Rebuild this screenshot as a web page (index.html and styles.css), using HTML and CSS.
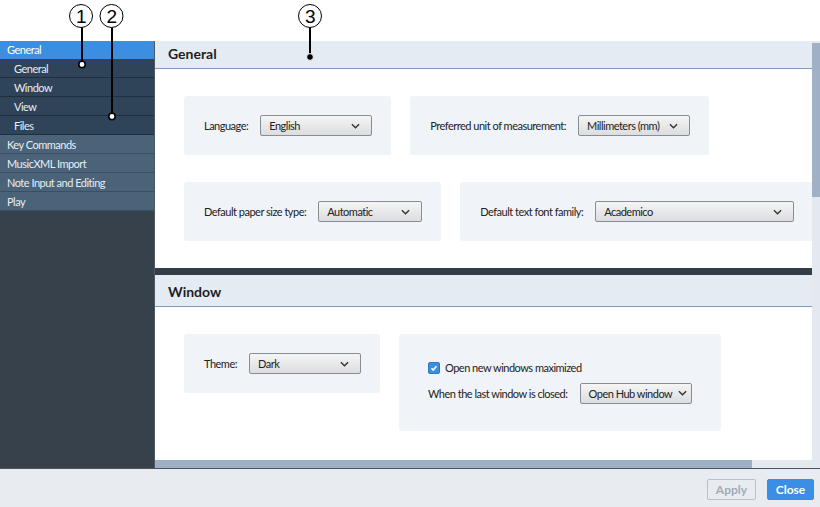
FILE: index.html
```html
<!DOCTYPE html>
<html lang="en">
<head>
    <meta charset="UTF-8">
    <title>Preferences</title>
    <link rel="stylesheet" href="styles.css">
</head>
<body>
    <div class="top-gap"></div>

    <div class="dialog">
        <nav class="sidebar">
            <div class="nav-item cur">General</div>
            <div class="nav-item sub">General</div>
            <div class="nav-item sub">Window</div>
            <div class="nav-item sub">View</div>
            <div class="nav-item sub">Files</div>
            <div class="nav-item">Key Commands</div>
            <div class="nav-item">MusicXML Import</div>
            <div class="nav-item">Note Input and Editing</div>
            <div class="nav-item">Play</div>
        </nav>

        <div class="main">
            <div class="viewport">
                <div class="pages">
                    <section class="page">
                        <h2 class="page-title">General</h2>
                        <div class="page-body">
                            <div class="row">
                                <div class="group">
                                    <span class="label">Language:</span>
                                    <div class="select w112"><span>English</span><svg viewBox="0 0 10 6"><path d="M1 1l4 4 4-4"/></svg></div>
                                </div>
                                <div class="group">
                                    <span class="label">Preferred unit of measurement:</span>
                                    <div class="select w112"><span>Millimeters (mm)</span><svg viewBox="0 0 10 6"><path d="M1 1l4 4 4-4"/></svg></div>
                                </div>
                            </div>
                            <div class="row">
                                <div class="group">
                                    <span class="label">Default paper size type:</span>
                                    <div class="select w104"><span>Automatic</span><svg viewBox="0 0 10 6"><path d="M1 1l4 4 4-4"/></svg></div>
                                </div>
                                <div class="group">
                                    <span class="label">Default text font family:</span>
                                    <div class="select w199"><span>Academico</span><svg viewBox="0 0 10 6"><path d="M1 1l4 4 4-4"/></svg></div>
                                </div>
                            </div>
                        </div>
                    </section>

                    <section class="page page-next">
                        <h2 class="page-title">Window</h2>
                        <div class="page-body">
                            <div class="row">
                                <div class="group group-short">
                                    <span class="label">Theme:</span>
                                    <div class="select w112"><span>Dark</span><svg viewBox="0 0 10 6"><path d="M1 1l4 4 4-4"/></svg></div>
                                </div>
                                <div class="group group-stack">
                                    <label class="check">
                                        <span class="box"><svg viewBox="0 0 12 12"><path d="M3 6.2l2 2.2 4-4.6"/></svg></span>
                                        Open new windows maximized
                                    </label>
                                    <div class="line">
                                        <span class="label">When the last window is closed:</span>
                                        <div class="select w112"><span>Open Hub window</span><svg viewBox="0 0 10 6"><path d="M1 1l4 4 4-4"/></svg></div>
                                    </div>
                                </div>
                            </div>
                        </div>
                    </section>
                </div>
                <div class="vscroll"><div class="vthumb"></div></div>
            </div>
            <div class="hscroll"><div class="hthumb"></div></div>
        </div>
    </div>

    <div class="footer">
        <button class="btn btn-off">Apply</button>
        <button class="btn btn-blue">Close</button>
    </div>

    <!-- callouts -->
    <svg class="callouts" width="820" height="507" viewBox="0 0 820 507">
        <g fill="none" stroke="#000" stroke-width="1">
            <circle cx="81" cy="16" r="11.5"/>
            <circle cx="111.5" cy="16" r="11.5"/>
            <circle cx="310" cy="16" r="11.5"/>
        </g>
        <g stroke="#000" stroke-width="2">
            <line x1="82" y1="27.5" x2="82" y2="62"/>
            <line x1="112" y1="27.5" x2="112" y2="114"/>
            <line x1="310" y1="27.5" x2="310" y2="55"/>
        </g>
        <circle cx="82" cy="64.5" r="3.2" fill="#fff" stroke="#000" stroke-width="1.6"/>
        <circle cx="112" cy="116.5" r="3.2" fill="#fff" stroke="#000" stroke-width="1.6"/>
        <circle cx="310" cy="57" r="3.4" fill="#000" stroke="#fff" stroke-width="1"/>
        <g font-family="Liberation Sans, sans-serif" font-size="19" text-anchor="middle">
            <text x="81" y="23">1</text>
            <text x="111.5" y="23">2</text>
            <text x="310" y="23">3</text>
        </g>
    </svg>
</body>
</html>
```

FILE: styles.css
```css
*{
    margin: 0;
    padding: 0;
    box-sizing: border-box;
}
body{
    width: 820px;
    height: 507px;
    overflow: hidden;
    position: relative;
    background: #fff;
    font-family: Lato, "Open Sans", sans-serif;
    font-size: 11px;
    letter-spacing: -0.5px;
    color: #222;
}
.top-gap{
    height: 41px;
}

/* dialog */
.dialog{
    display: flex;
    height: 428px;
    border-bottom: 1px solid #4a5561;
}
.sidebar{
    width: 155px;
    flex-shrink: 0;
    background: #36414b;
    border-right: 1px solid #4d5864;
}
.nav-item{
    height: 19px;
    line-height: 19px;
    padding-left: 7px;
    color: #e8eef4;
    background: #4a6378;
    border-bottom: 1px solid #3a4f62;
}
.nav-item.sub{
    padding-left: 14px;
    background: #2f4458;
    border-bottom-color: #1f2f3e;
}
.nav-item.cur{
    height: 18px;
    line-height: 18px;
    background: #3c8ee0;
    color: #fff;
    border-bottom: 0;
}

.main{
    flex: 1;
    display: flex;
    flex-direction: column;
    min-width: 0;
}
.viewport{
    flex: 1;
    display: flex;
    overflow: hidden;
}
.pages{
    flex: 1;
    overflow: hidden;
}
.vscroll{
    width: 8px;
    background: #e4e9f0;
    padding-top: 2px;
}
.vthumb{
    height: 154px;
    background: #a0b0c5;
}
.hscroll{
    height: 8px;
    background: #e4e9f0;
}
.hthumb{
    width: 597px;
    height: 8px;
    background: #9fb0c6;
}

/* pages */
.page-title{
    height: 28px;
    line-height: 26px;
    padding-left: 13px;
    font-size: 14px;
    font-weight: bold;
    letter-spacing: 0;
    color: #1e1e1e;
    background: #e5ebf3;
    border-bottom: 1px solid #7f9bbd;
}
.page-next{
    border-top: 7px solid #333d47;
}
.page-next .page-title{
    height: 32px;
    line-height: 33px;
}
.page-body{
    padding: 27px 0 27px 29px;
    display: flex;
    flex-direction: column;
    gap: 27px;
}
.row{
    display: flex;
    gap: 19px;
}
.group{
    display: flex;
    align-items: center;
    gap: 12px;
    height: 59px;
    padding: 0 19px 0 20px;
    background: #f0f3f8;
    border-radius: 3px;
}
.group-stack{
    height: 97px;
    padding: 0 29px;
    flex-direction: column;
    align-items: flex-start;
    justify-content: center;
    gap: 9px;
}
.label{
    white-space: nowrap;
}
.line{
    display: flex;
    align-items: center;
    gap: 12px;
}

/* select */
.select{
    display: flex;
    align-items: center;
    justify-content: space-between;
    gap: 6px;
    height: 21px;
    padding: 0 11px 0 8px;
    border: 1px solid #8a8d91;
    border-radius: 2px;
    background: linear-gradient(#f5f5f5, #dcdddf);
    color: #222;
    white-space: nowrap;
    overflow: hidden;
}
.select svg{
    flex-shrink: 0;
    width: 9px;
    height: 6px;
    fill: none;
    stroke: #333;
    stroke-width: 1.5;
}
.w112{ width: 112px; }
.w104{ width: 104px; }
.w199{ width: 199px; }

/* checkbox */
.check{
    display: flex;
    align-items: center;
    gap: 5px;
    height: 12px;
}
.check .box{
    width: 12px;
    height: 12px;
    background: #3b8fdf;
    border: 1px solid #2f76bd;
    border-radius: 2px;
}
.check svg{
    display: block;
    width: 10px;
    height: 10px;
    fill: none;
    stroke: #fff;
    stroke-width: 1.8;
}

/* footer */
.footer{
    height: 38px;
    background: #e8ebf0;
    display: flex;
    justify-content: flex-end;
    align-items: flex-start;
    gap: 11px;
    padding: 10px 6px 0 0;
}
.btn{
    height: 21px;
    padding: 0;
    border-radius: 2px;
    font-family: Lato, "Open Sans", sans-serif;
    font-size: 12px;
    font-weight: bold;
}
.btn-off{
    width: 49px;
    background: transparent;
    border: 1px solid #b6c2ce;
    color: #9fabb9;
}
.btn-blue{
    width: 47px;
    background: #3b8ee6;
    border: 1px solid #3b8ee6;
    color: #fff;
}

.callouts{
    position: absolute;
    top: 0;
    left: 0;
    pointer-events: none;
}
```
